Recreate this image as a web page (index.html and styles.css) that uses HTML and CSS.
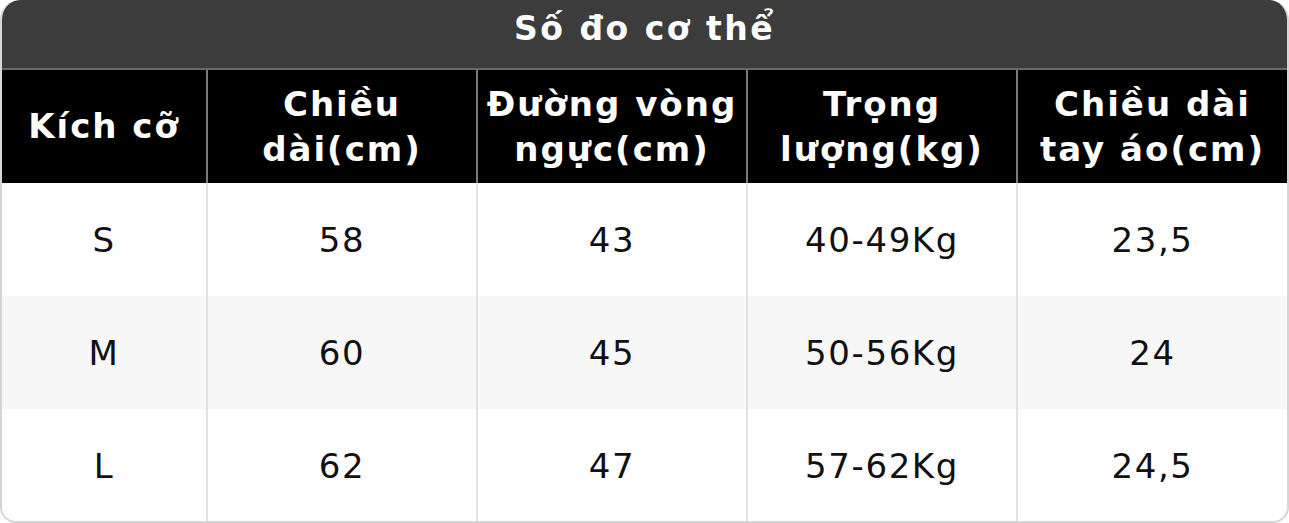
FILE: index.html
```html
<!DOCTYPE html>
<html lang="vi">
<head>
<meta charset="utf-8">
<title>Số đo cơ thể</title>
<link rel="stylesheet" href="styles.css">
</head>
<body>
<div class="card">
  <div class="title">Số đo cơ thể</div>
  <table class="sizes">
    <colgroup>
      <col class="c-first">
      <col><col><col><col>
    </colgroup>
    <thead>
      <tr>
        <th>Kích cỡ</th>
        <th>Chiều<br>dài(cm)</th>
        <th>Đường vòng<br>ngực(cm)</th>
        <th>Trọng<br>lượng(kg)</th>
        <th>Chiều dài<br>tay áo(cm)</th>
      </tr>
    </thead>
    <tbody>
      <tr><td>S</td><td>58</td><td>43</td><td>40-49Kg</td><td>23,5</td></tr>
      <tr class="alt"><td>M</td><td>60</td><td>45</td><td>50-56Kg</td><td>24</td></tr>
      <tr><td>L</td><td>62</td><td>47</td><td>57-62Kg</td><td>24,5</td></tr>
    </tbody>
  </table>
</div>
</body>
</html>
```
FILE: styles.css
```css
html, body {
  margin: 0;
  padding: 0;
  background: #ffffff;
}

.card {
  box-sizing: border-box;
  width: 1289px;
  height: 523px;
  border-radius: 20px 20px 16px 16px;
  overflow: hidden;
  border-left: 2px solid #d6d6d6;
  border-right: 2px solid #d6d6d6;
  border-bottom: 2px solid #d6d6d6;
  background: #ffffff;
  font-family: "DejaVu Sans", Verdana, sans-serif;
}

.title {
  background: #3c3c3c;
  color: #ffffff;
  font-weight: bold;
  font-size: 33px;
  letter-spacing: 2.5px;
  text-align: center;
  line-height: 58px;
  height: 70px;
  box-sizing: border-box;
  border-bottom: 2px solid #6a6a6a;
  margin: 0 -2px;
}

.sizes {
  width: 100%;
  border-collapse: collapse;
  table-layout: fixed;
}

.c-first {
  width: 205px;
}

.sizes th {
  background: #000000;
  color: #ffffff;
  font-weight: bold;
  font-size: 34px;
  letter-spacing: 2px;
  line-height: 45px;
  height: 113px;
  padding: 0;
  text-align: center;
  vertical-align: middle;
  border-left: 2px solid #7a7a7a;
  box-sizing: border-box;
}

.sizes th:first-child {
  border-left: none;
}

.sizes td {
  color: #111111;
  font-size: 34px;
  letter-spacing: 1.6px;
  height: 113px;
  padding: 0;
  text-align: center;
  vertical-align: middle;
  border-left: 2px solid #e2e2e2;
  box-sizing: border-box;
}

.sizes td:first-child {
  border-left: none;
}

.sizes tr.alt td {
  background: #f7f7f7;
}
```
